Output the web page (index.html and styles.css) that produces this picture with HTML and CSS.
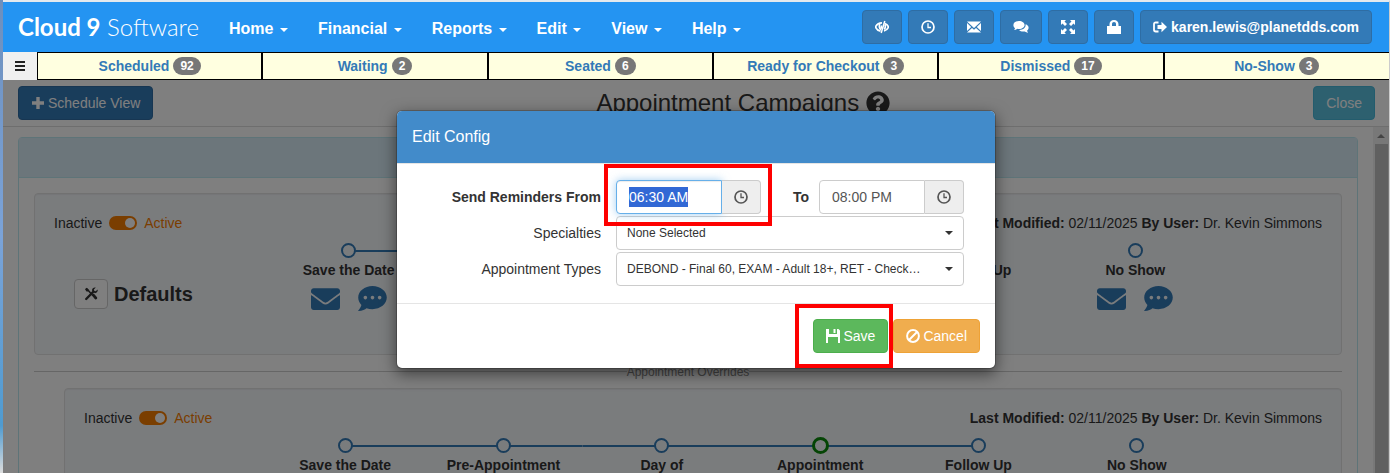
FILE: index.html
```html
<!DOCTYPE html>
<html lang="en">
<head>
    <meta charset="UTF-8">
    <meta name="viewport" content="width=device-width, initial-scale=1.0">
    <title>Cloud 9 Software - Appointment Campaigns</title>
    <link rel="stylesheet" href="styles.css">
</head>
<body>
    <!-- Shared icons -->
    <svg class="sprite" aria-hidden="true">
        <symbol id="i-envelope" viewBox="0 64 512 384"><path d="M502.3 190.8c3.9-3.1 9.7-.2 9.7 4.7V400c0 26.5-21.5 48-48 48H48c-26.5 0-48-21.5-48-48V195.6c0-5 5.7-7.8 9.7-4.7 22.4 17.4 52.1 39.5 154.1 113.6 21.1 15.4 56.7 47.8 92.2 47.6 35.7.3 72-32.8 92.3-47.6 102-74.1 131.6-96.3 154-113.7zM256 320c23.2.4 56.6-29.2 73.4-41.4 132.7-96.3 142.8-104.7 173.4-128.7 5.8-4.5 9.2-11.5 9.2-18.9v-19c0-26.5-21.5-48-48-48H48c-26.5 0-48 21.5-48 48v19c0 7.4 3.4 14.3 9.2 18.9 30.6 23.9 40.7 32.4 173.4 128.7 16.8 12.2 50.2 41.8 73.4 41.4z"/></symbol>
        <symbol id="i-comment" viewBox="0 32 512 448"><path d="M256 32C114.6 32 0 125.1 0 240c0 49.6 21.4 95 57 130.7C44.5 421.1 2.7 466 2.2 466.5c-2.2 2.3-2.8 5.7-1.5 8.7S4.8 480 8 480c66.3 0 116-31.8 140.6-51.4 32.7 12.3 69 19.4 107.4 19.4 141.4 0 256-93.1 256-208S397.4 32 256 32zM128 272c-17.7 0-32-14.3-32-32s14.3-32 32-32 32 14.3 32 32-14.3 32-32 32zm128 0c-17.7 0-32-14.3-32-32s14.3-32 32-32 32 14.3 32 32-14.3 32-32 32zm128 0c-17.7 0-32-14.3-32-32s14.3-32 32-32 32 14.3 32 32-14.3 32-32 32z"/></symbol>
        <symbol id="i-clock" viewBox="0 0 14 14"><circle cx="7" cy="7" r="6" fill="none" stroke="currentColor" stroke-width="1.7"/><path d="M7 3.2V7.5H10" fill="none" stroke="currentColor" stroke-width="1.3"/></symbol>
    </svg>

    <div class="app">
        <header class="navbar">
            <a class="brand" href="#"><b>Cloud 9</b> Software</a>
            <nav class="menu">
                <a href="#">Home <span class="caret"></span></a>
                <a href="#">Financial <span class="caret"></span></a>
                <a href="#">Reports <span class="caret"></span></a>
                <a href="#">Edit <span class="caret"></span></a>
                <a href="#">View <span class="caret"></span></a>
                <a href="#">Help <span class="caret"></span></a>
            </nav>
            <div class="nav-buttons">
                <button class="btn btn-primary" aria-label="Hide details">
                    <svg class="icon" viewBox="0 0 14 14" fill="none" stroke="currentColor"><path d="M5.500 11.200C3 10.700 1.300 9 .5 7 1.700 4.300 4 2.800 7 2.800M9.800 3.500C11.600 4.200 12.900 5.500 13.500 7c-.8 1.900-2.300 3.400-4.500 4" stroke-width="1.700"/><path d="M5 4C3.800 5.600 4 8.400 6 9.800M6.600 5.500C5.900 7 6.300 8 7 8.300M10 4.500c.6 1.600.4 3.600-.8 4.900" stroke-width="1.600"/><path d="M9.800 1 6.200 13" stroke-width="1.500"/></svg>
                </button>
                <button class="btn btn-primary" aria-label="Time clock">
                    <svg class="icon"><use href="#i-clock"/></svg>
                </button>
                <button class="btn btn-primary" aria-label="Mail">
                    <svg class="icon" viewBox="0 0 14 14"><path d="M0 1.500h14L7 8zM0 3l4.200 4L0 11zM14 3 9.800 7 14 11zM0 12.500 5 7.900l2 1.800 2-1.800 5 4.600z"/></svg>
                </button>
                <button class="btn btn-primary" aria-label="Chat">
                    <svg class="icon icon-wide" viewBox="0 0 16 14"><path d="M6 1c3.200 0 5.600 1.700 5.600 4S9.200 9 6 9c-.6 0-1.100 0-1.600-.2C3.400 9.600 2.200 10 1 10.100c.5-.6.9-1.200 1-1.900C.9 7.400.4 6.200.4 5 .4 2.700 2.800 1 6 1z"/><path d="M12.600 4.300c1.900.6 3 1.900 3 3.500 0 1.100-.6 2-1.500 2.700.1.800.5 1.500 1.100 2.200-1.400-.1-2.600-.6-3.500-1.300-2.300.5-4.400-.1-5.600-1.400 3.900.1 6.800-2.100 6.500-5.700z"/></svg>
                </button>
                <button class="btn btn-primary" aria-label="Full screen">
                    <svg class="icon" viewBox="0 0 14 14"><path d="M0 0h5L3.500 1.500 6 4 4 6 1.500 3.500 0 5zM14 0v5l-1.500-1.500L10 6 8 4l2.500-2.500L9 0zM0 14V9l1.500 1.500L4 8l2 2-2.500 2.500L5 14zM14 14H9l1.500-1.500L8 10l2-2 2.500 2.500L14 9z"/></svg>
                </button>
                <button class="btn btn-primary" aria-label="Lock">
                    <svg class="icon" viewBox="0 0 14 14"><path d="M2.500 6V4.200C2.500 1.700 4.300 0 7 0s4.500 1.700 4.500 4.200V6H14v8H0V6zM5 6h4V4.200C9 2.800 8.200 2 7 2s-2 .8-2 2.200z"/></svg>
                </button>
                <button class="btn btn-primary btn-user">
                    <svg class="icon" viewBox="0 0 14 14"><path d="M5.500 2.500H2.800C1.600 2.500 1 3.200 1 4.200v5.600c0 1 .6 1.700 1.800 1.700h2.700" fill="none" stroke="currentColor" stroke-width="1.800"/><path d="M8.500 1.800 14 7l-5.500 5.200V9H4.500V5h4z"/></svg>
                    karen.lewis@planetdds.com
                </button>
            </div>
        </header>

        <div class="status-bar">
            <button class="menu-toggle" aria-label="Toggle menu">
                <svg class="icon" viewBox="0 0 14 14"><path d="M2 2h10v2H2zM2 6h10v2H2zM2 10h10v2H2z"/></svg>
            </button>
            <div class="status-list">
                <a href="#">Scheduled <span class="badge">92</span></a>
                <a href="#">Waiting <span class="badge">2</span></a>
                <a href="#">Seated <span class="badge">6</span></a>
                <a href="#">Ready for Checkout <span class="badge">3</span></a>
                <a href="#">Dismissed <span class="badge">17</span></a>
                <a href="#">No-Show <span class="badge">3</span></a>
            </div>
        </div>

        <main class="content">
            <div class="page-header">
                <button class="btn btn-primary">
                    <svg class="icon" viewBox="0 0 14 14"><path d="M5.300 1h3.400v4.300H13v3.400H8.700V13H5.300V8.700H1V5.300h4.300z"/></svg>
                    Schedule View
                </button>
                <h1>Appointment Campaigns
                    <svg class="help" viewBox="0 0 512 512"><path d="M504 256c0 136.997-111.043 248-248 248S8 392.997 8 256C8 119.083 119.043 8 256 8s248 111.083 248 248zM262.655 90c-54.497 0-89.255 22.957-116.549 63.758-3.536 5.286-2.353 12.415 2.715 16.258l34.699 26.310c5.205 3.947 12.621 3.008 16.665-2.122 17.864-22.658 30.113-35.797 57.303-35.797 20.429 0 45.698 13.148 45.698 32.958 0 14.976-12.363 22.667-32.534 33.976C247.128 238.528 216 254.941 216 296v4c0 6.627 5.373 12 12 12h56c6.627 0 12-5.373 12-12v-1.333c0-28.462 83.186-29.647 83.186-106.667 0-58.002-60.165-102-116.531-102zM256 338c-25.365 0-46 20.635-46 46 0 25.364 20.635 46 46 46s46-20.636 46-46c0-25.365-20.635-46-46-46z"/></svg>
                </h1>
                <button class="btn btn-info">Close</button>
            </div>

            <div class="scroll-area">
                <div class="panel">
                    <div class="panel-heading"></div>
                    <div class="panel-body">
                        <section class="well">
                            <div class="well-top">
                                <label class="switch">Inactive <input type="checkbox" checked> <span>Active</span></label>
                                <p><b>Last Modified:</b> 02/11/2025 <b>By User:</b> Dr. Kevin Simmons</p>
                            </div>
                            <div class="campaign">
                                <div class="campaign-name">
                                    <button class="btn btn-default" aria-label="Edit config">
                                        <svg class="icon" viewBox="0 0 14 14"><path d="M2.500 1.500 12 12" stroke="currentColor" stroke-width="1.600"/><path d="m8.200 7.800 1.600-1.200 3.200 3.600c.9 1.200-.9 2.800-2 1.800zM1 2.200 2.400.8l2.200 1.600v1.400L3.800 4.600H2.500z"/><path d="M2.200 12 9.500 4.500" stroke="currentColor" stroke-width="2.400" stroke-linecap="round"/><path d="M11.800.6 9.900 2.400l.3 1.500 1.500.3 1.900-1.800c.6 2-.9 4-3 3.700L8 3.600C7.800 1.600 9.700 0 11.800.6z"/></svg>
                                    </button>
                                    <h2>Defaults</h2>
                                </div>
                                <ol class="steps">
                                    <li><span class="dot"></span>Save the Date
                                        <div class="channels"><svg class="mail"><use href="#i-envelope"/></svg><svg class="chat"><use href="#i-comment"/></svg></div></li>
                                    <li><span class="dot"></span>Pre-Appointment</li>
                                    <li><span class="dot"></span>Day of</li>
                                    <li><span class="dot current"></span>Appointment</li>
                                    <li><span class="dot"></span>Follow Up</li>
                                    <li><span class="dot"></span>No Show
                                        <div class="channels"><svg class="mail"><use href="#i-envelope"/></svg><svg class="chat"><use href="#i-comment"/></svg></div></li>
                                </ol>
                            </div>
                        </section>

                        <div class="divider">Appointment Overrides</div>

                        <section class="well well-override">
                            <div class="well-top">
                                <label class="switch">Inactive <input type="checkbox" checked> <span>Active</span></label>
                                <p><b>Last Modified:</b> 02/11/2025 <b>By User:</b> Dr. Kevin Simmons</p>
                            </div>
                            <div class="campaign">
                                <div class="campaign-name"></div>
                                <ol class="steps">
                                    <li><span class="dot"></span>Save the Date</li>
                                    <li><span class="dot"></span>Pre-Appointment</li>
                                    <li><span class="dot"></span>Day of</li>
                                    <li><span class="dot current"></span>Appointment</li>
                                    <li><span class="dot"></span>Follow Up</li>
                                    <li><span class="dot"></span>No Show</li>
                                </ol>
                            </div>
                        </section>
                    </div>
                </div>
                <div class="scrollbar"><span class="scroll-up"></span><span class="scroll-thumb"></span></div>
            </div>

            <!-- Edit Config dialog -->
            <div class="backdrop">
                <form class="modal" role="dialog" aria-labelledby="modalTitle">
                    <h2 class="modal-header" id="modalTitle">Edit Config</h2>
                    <div class="modal-body">
                        <label for="timeFrom"><b>Send Reminders From</b></label>
                        <div class="time-row">
                            <div class="input-group highlight">
                                <input type="text" id="timeFrom" value="06:30 AM">
                                <button type="button" aria-label="Pick start time"><svg class="icon"><use href="#i-clock"/></svg></button>
                            </div>
                            <label for="timeTo"><b>To</b></label>
                            <div class="input-group">
                                <input type="text" id="timeTo" value="08:00 PM">
                                <button type="button" aria-label="Pick end time"><svg class="icon"><use href="#i-clock"/></svg></button>
                            </div>
                        </div>
                        <label for="specialties">Specialties</label>
                        <div class="select">
                            <select id="specialties"><option>None Selected</option></select>
                            <span class="caret"></span>
                        </div>
                        <label for="types">Appointment Types</label>
                        <div class="select">
                            <select id="types"><option>DEBOND - Final 60, EXAM - Adult 18+, RET - Check…</option></select>
                            <span class="caret"></span>
                        </div>
                    </div>
                    <div class="modal-footer">
                        <button type="button" class="btn btn-success highlight">
                            <svg class="icon" viewBox="0 0 14 14"><path d="M0 0h3v5h8V0h1.500L14 1.500V14h-2V8H2v6H0zM7.500 0h2v4h-2z"/></svg>
                            Save
                        </button>
                        <button type="button" class="btn btn-warning">
                            <svg class="icon" viewBox="0 0 14 14" fill="none" stroke="currentColor" stroke-width="2"><circle cx="7" cy="7" r="5.900"/><path d="m3 11 8-8"/></svg>
                            Cancel
                        </button>
                    </div>
                </form>
            </div>
        </main>
    </div>

    <script>
        // Start time is focused and selected when the dialog opens
        const timeFrom = document.getElementById('timeFrom');
        timeFrom.focus({ preventScroll: true });
        timeFrom.select();
    </script>
</body>
</html>
```
FILE: styles.css
```css
*, *::before, *::after {
    box-sizing: border-box;
}

body {
    margin: 0;
    font-family: "Liberation Sans", Arial, sans-serif;
    font-size: 14px;
    line-height: 20px;
    color: #333;
    background: linear-gradient(#6d8fbd, #7ba3d8 50%, #4f9bd0 90%, #ddd);
}

h1, h2, p, ol {
    margin: 0;
    padding: 0;
}

a {
    text-decoration: none;
}

button, input, select {
    font: inherit;
}

.sprite {
    display: none;
}

.app {
    display: flex;
    flex-direction: column;
    height: 100vh;
    margin-left: 3px;
    border-top: 2px solid #e4e9ee;
    border-right: 1px solid #ccc;
    overflow: hidden;
    background: #fff;
}

.icon {
    width: 14px;
    height: 14px;
    fill: currentColor;
    flex: none;
}

svg.icon[fill="none"] {
    fill: none;
}

.icon-wide {
    width: 16px;
}

.caret {
    display: inline-block;
    margin-left: 2px;
    vertical-align: middle;
    border-top: 4px solid;
    border-left: 4px solid transparent;
    border-right: 4px solid transparent;
}

/* Buttons */
.btn {
    display: inline-flex;
    align-items: center;
    gap: 3px;
    height: 34px;
    padding: 0 12px;
    border: 1px solid;
    border-radius: 4px;
    color: #fff;
    white-space: nowrap;
    cursor: pointer;
}

.btn-primary {
    background: #337ab7;
    border-color: #2e6da4;
}

.btn-info {
    background: #5bc0de;
    border-color: #46b8da;
}

.btn-success {
    background: #5cb85c;
    border-color: #4cae4c;
}

.btn-warning {
    background: #f0ad4e;
    border-color: #eea236;
}

.btn-default {
    height: 30px;
    padding: 0 9px;
    background: #fff;
    border-color: #ccc;
    color: #333;
}

/* Top navigation */
.navbar {
    display: flex;
    align-items: center;
    flex: none;
    height: 50px;
    padding: 0 17px 0 15px;
    background: #2494f2;
}

.brand {
    width: 196px;
    font-family: Lato, sans-serif;
    font-size: 24px;
    font-weight: 300;
    color: #fff;
    white-space: nowrap;
}

.brand b {
    font-weight: 700;
}

.menu {
    display: flex;
    padding-top: 4px;
}

.menu a {
    padding: 0 15px;
    font-size: 16px;
    font-weight: bold;
    color: #fff;
    white-space: nowrap;
}

.nav-buttons {
    display: flex;
    gap: 6px;
    margin-left: auto;
}

.btn-user {
    gap: 4px;
    font-weight: bold;
}

/* Patient status counts */
.status-bar {
    display: flex;
    flex: none;
    height: 28px;
}

.menu-toggle {
    display: grid;
    place-items: center;
    width: 34px;
    padding: 0;
    border: 0;
    background: #f0f0f0;
    color: #222;
}

.status-list {
    flex: 1;
    display: grid;
    grid-template-columns: repeat(6, 1fr);
}

.status-list a {
    display: flex;
    justify-content: center;
    align-items: center;
    gap: 4px;
    border: 1px solid #000;
    background: #ffffe0;
    color: #337ab7;
    font-weight: bold;
}

.status-list a:last-child {
    border-right: 0;
}

.badge {
    padding: 3px 7px;
    border-radius: 10px;
    background: #777;
    color: #fff;
    font-size: 12px;
    line-height: 12px;
}

/* Page content */
.content {
    position: relative;
    flex: 1;
    min-height: 0;
    display: flex;
    flex-direction: column;
}

.page-header {
    display: flex;
    align-items: center;
    flex: none;
    height: 47px;
    padding: 0 14px 0 15px;
    border-bottom: 1px solid #ddd;
}

.page-header h1 {
    flex: 1;
    display: flex;
    justify-content: center;
    align-items: center;
    gap: 7px;
    padding-left: 20px;
    font-size: 24px;
    font-weight: normal;
}

.help {
    width: 24px;
    height: 24px;
    fill: currentColor;
}

.scroll-area {
    flex: 1;
    min-height: 0;
    display: flex;
    overflow: hidden;
}

.panel {
    flex: 1;
    height: 500px;
    margin: 10px 15px;
    border: 1px solid #bce8f1;
    border-radius: 4px;
}

.panel-heading {
    height: 40px;
    border-bottom: 1px solid #bce8f1;
    background: #d9edf7;
}

.panel-body {
    padding: 15px;
}

.well {
    padding: 19px;
    border: 1px solid #e3e3e3;
    border-radius: 4px;
    background: #f5f8fb;
    box-shadow: inset 0 1px 1px rgba(0, 0, 0, 0.05);
}

.well-override {
    margin-left: 30px;
}

.well-top {
    display: flex;
    justify-content: space-between;
    margin-bottom: 10px;
}

.switch {
    display: flex;
    align-items: center;
    gap: 7px;
}

.switch span {
    color: #f57c00;
}

.switch input {
    appearance: none;
    display: flex;
    justify-content: flex-end;
    width: 28px;
    height: 14px;
    margin: 0;
    padding: 2px;
    border-radius: 7px;
    background: #f57c00;
}

.switch input::before {
    content: "";
    width: 10px;
    height: 10px;
    border-radius: 50%;
    background: #fff;
}

.campaign {
    display: grid;
    grid-template-columns: 216px 1fr 108px;
    min-height: 92px;
}

.well-override .campaign {
    grid-template-columns: 182px 1fr 106px;
}

.campaign-name {
    display: flex;
    align-items: center;
    align-self: start;
    gap: 6px;
    padding: 36px 0 0 20px;
}

.campaign-name h2 {
    font-size: 20px;
}

.steps {
    display: grid;
    grid-template-columns: repeat(6, 1fr);
    list-style: none;
    text-align: center;
    font-weight: bold;
}

/* Circle in the middle of a connector line */
.dot {
    display: grid;
    grid-template: 15px / 15px;
    place-content: center;
    place-items: center;
    margin-bottom: 2px;
    background: linear-gradient(#337ab7, #337ab7) center / 100% 2px no-repeat;
}

.dot::before {
    content: "";
    width: 15px;
    height: 15px;
    border: 2px solid #337ab7;
    border-radius: 50%;
    background: #f5f8fb;
}

.dot.current::before {
    width: 17px;
    height: 17px;
    border: 3px solid #0a8a0a;
}

.steps li:first-child .dot {
    background-size: 50% 2px;
    background-position: right center;
}

.steps li:nth-child(5) .dot {
    background-size: 50% 2px;
    background-position: left center;
}

.steps li:last-child .dot {
    background: none;
}

.channels {
    display: flex;
    justify-content: center;
    align-items: center;
    gap: 18px;
    margin-top: 6px;
    fill: #337ab7;
}

.mail {
    width: 29px;
    height: 22px;
}

.chat {
    width: 29px;
    height: 25px;
}

.divider {
    display: flex;
    align-items: center;
    height: 33px;
    font-size: 12px;
    color: #888;
}

.divider::before, .divider::after {
    content: "";
    flex: 1;
    height: 1px;
    background: #ccc;
}

.scrollbar {
    display: flex;
    flex-direction: column;
    align-items: center;
    width: 16px;
    background: #f1f1f1;
}

.scroll-up {
    margin: 7px 0 6px;
    border-bottom: 4px solid #888;
    border-left: 4px solid transparent;
    border-right: 4px solid transparent;
}

.scroll-thumb {
    flex: 1;
    width: 13px;
    background: #c1c1c1;
}

/* Dialog */
.backdrop {
    position: absolute;
    inset: 0;
    display: flex;
    justify-content: center;
    align-items: flex-start;
    padding-top: 30px;
    background: rgba(0, 0, 0, 0.5);
}

.modal {
    width: 600px;
    border: 1px solid rgba(0, 0, 0, 0.2);
    border-radius: 6px;
    background: #fff;
    background-clip: padding-box;
    box-shadow: 0 5px 15px rgba(0, 0, 0, 0.5);
}

.modal-header {
    padding: 16px 15px;
    border-bottom: 1px solid #e5e5e5;
    border-radius: 5px 5px 0 0;
    background: #428bca;
    color: #fff;
    font-size: 16px;
    font-weight: normal;
}

.modal-body {
    display: grid;
    grid-template-columns: 1fr 348px;
    align-items: center;
    gap: 2px 15px;
    padding: 16px 31px 17px 15px;
    text-align: right;
}

.time-row {
    display: flex;
    align-items: center;
    justify-content: flex-end;
    gap: 10px;
}

.time-row .highlight {
    margin-right: auto;
}

.input-group {
    display: flex;
    width: 145px;
    height: 34px;
}

.input-group input {
    width: 106px;
    padding: 0 12px;
    border: 1px solid #ccc;
    border-radius: 4px 0 0 4px;
    color: #555;
}

.input-group input:focus {
    outline: 0;
    border-color: #66afe9;
    box-shadow: inset 0 1px 1px rgba(0, 0, 0, 0.08), 0 0 8px rgba(102, 175, 233, 0.6);
}

.input-group input::selection {
    background: rgba(47, 102, 212, 0.99);
    color: #fff;
}

.input-group button {
    display: grid;
    place-items: center;
    flex: 1;
    padding: 0;
    border: 1px solid #ccc;
    border-left: 0;
    border-radius: 0 4px 4px 0;
    background: #eee;
    color: #555;
}

.select {
    display: grid;
    align-items: center;
}

.select > * {
    grid-area: 1 / 1;
}

.select select {
    appearance: none;
    width: 100%;
    height: 34px;
    padding: 0 30px 0 10px;
    border: 1px solid #ccc;
    border-radius: 4px;
    background: #fff;
    color: #333;
    font-size: 12px;
}

.select .caret {
    justify-self: end;
    margin-right: 11px;
    pointer-events: none;
}

.modal-footer {
    display: flex;
    justify-content: flex-end;
    gap: 5px;
    padding: 15px;
    border-top: 1px solid #e5e5e5;
}

/* Red call-out frames */
.highlight {
    position: relative;
}

.highlight::after {
    content: "";
    position: absolute;
    inset: -16px -11px -12px -12px;
    z-index: 1;
    border: 4px solid #fe0000;
    pointer-events: none;
}

.btn.highlight::after {
    inset: -16px -6px -16px -19px;
}
```
